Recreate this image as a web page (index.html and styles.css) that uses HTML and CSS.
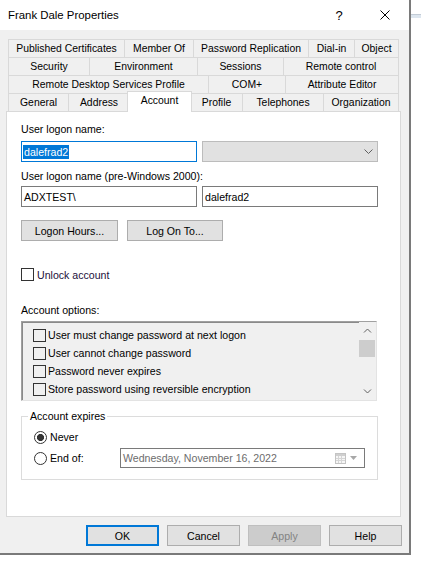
FILE: index.html
```html
<!DOCTYPE html>
<html>
<head>
<meta charset="utf-8">
<title>Frank Dale Properties</title>
<link rel="stylesheet" href="styles.css">
</head>
<body>
<div class="screen">
  <div class="window">
    <div class="titlebar">
      <span class="title">Frank Dale Properties</span>
      <span class="cap-btn cap-help">?</span>
      <span class="cap-btn cap-close">
        <svg width="10" height="10" viewBox="0 0 10 10"><path d="M0.5 0.5 L9.5 9.5 M9.5 0.5 L0.5 9.5" stroke="#000" stroke-width="1" fill="none"/></svg>
      </span>
    </div>
    <div class="body">
      <div class="tabs">
        <div class="tabrow">
          <div class="tab w116">Published Certificates</div>
          <div class="tab w69">Member Of</div>
          <div class="tab w115">Password Replication</div>
          <div class="tab w46">Dial-in</div>
          <div class="tab w45 last">Object</div>
        </div>
        <div class="tabrow">
          <div class="tab w81">Security</div>
          <div class="tab w108">Environment</div>
          <div class="tab w86">Sessions</div>
          <div class="tab w116 last">Remote control</div>
        </div>
        <div class="tabrow">
          <div class="tab w200">Remote Desktop Services Profile</div>
          <div class="tab w77">COM+</div>
          <div class="tab w114 last">Attribute Editor</div>
        </div>
        <div class="tabrow">
          <div class="tab w60">General</div>
          <div class="tab w61">Address</div>
          <div class="tab sel">Account</div>
          <div class="tab w52">Profile</div>
          <div class="tab w81">Telephones</div>
          <div class="tab w76 last">Organization</div>
        </div>
      </div>
      <div class="panel">
        <div class="lbl">User logon name:</div>
        <div class="row r1">
          <div class="field focus"><span class="selected">dalefrad2</span></div>
          <div class="combo">
            <svg class="chev" width="9" height="5" viewBox="0 0 9 5"><path d="M0.5 0.5 L4.5 4.5 L8.5 0.5" stroke="#606060" stroke-width="1" fill="none"/></svg>
          </div>
        </div>
        <div class="lbl l2">User logon name (pre-Windows 2000):</div>
        <div class="row r2">
          <div class="field">ADXTEST\</div>
          <div class="field">dalefrad2</div>
        </div>
        <div class="row r3">
          <div class="btn w97">Logon Hours...</div>
          <div class="btn w96">Log On To...</div>
        </div>
        <div class="check-row unlock"><span class="cb"></span><span class="unlock-text">Unlock account</span></div>
        <div class="lbl l3">Account options:</div>
        <div class="listbox">
          <div class="items">
            <div class="item"><span class="cb"></span>User must change password at next logon</div>
            <div class="item"><span class="cb"></span>User cannot change password</div>
            <div class="item"><span class="cb"></span>Password never expires</div>
            <div class="item"><span class="cb"></span>Store password using reversible encryption</div>
          </div>
          <div class="vscroll">
            <div class="sb-btn">
              <svg width="9" height="5" viewBox="0 0 9 5"><path d="M1 4.5 L4.5 1 L8 4.5" stroke="#606060" stroke-width="1" fill="none"/></svg>
            </div>
            <div class="sb-thumb"></div>
            <div class="sb-track"></div>
            <div class="sb-btn">
              <svg width="9" height="5" viewBox="0 0 9 5"><path d="M1 0.5 L4.5 4 L8 0.5" stroke="#606060" stroke-width="1" fill="none"/></svg>
            </div>
          </div>
        </div>
        <fieldset class="group">
          <legend>Account expires</legend>
          <div class="group-body">
            <div class="radio-row"><span class="radio on"></span><span>Never</span></div>
            <div class="radio-row">
              <div class="radio-item"><span class="radio"></span><span>End of:</span></div>
              <div class="date">
                <span class="date-text">Wednesday, November 16, 2022</span>
                <svg class="cal" width="11" height="11" viewBox="0 0 11 11">
                  <rect x="0.5" y="0.5" width="10" height="10" fill="#f6f6f6" stroke="#c4c4c4"/>
                  <rect x="1" y="1" width="9" height="2" fill="#cfcfcf"/>
                  <path d="M3.5 3 V10 M6.5 3 V10 M1 5.5 H10 M1 7.5 H10" stroke="#d6d6d6" stroke-width="1"/>
                </svg>
                <svg class="tri" width="7" height="4" viewBox="0 0 7 4"><path d="M0 0 H7 L3.5 4 Z" fill="#a8a8a8"/></svg>
              </div>
            </div>
          </div>
        </fieldset>
      </div>
      <div class="footer">
        <div class="btn fbtn default">OK</div>
        <div class="btn fbtn">Cancel</div>
        <div class="btn fbtn disabled">Apply</div>
        <div class="btn fbtn">Help</div>
      </div>
    </div>
  </div>
  <div class="side"><div class="side-band"></div></div>
</div>
</body>
</html>
```
FILE: styles.css
```css
* { box-sizing: border-box; }
html, body { margin: 0; padding: 0; background: #fff; }
body {
  font-family: "Liberation Sans", Arial, sans-serif;
  font-size: 10.6px;
  color: #000;
}
.screen { display: flex; align-items: flex-start; width: 421px; height: 562px; }
.window {
  flex: none;
  width: 411px;
  height: 555px;
  background: #f0f0f0;
  border-right: 2px solid #7a7a7a;
  border-bottom: 2px solid #7a7a7a;
  display: flex;
  flex-direction: column;
}
.titlebar {
  flex: none;
  height: 30px;
  background: #fff;
  display: flex;
  align-items: center;
  padding-left: 8px;
  padding-right: 1px;
}
.title { font-size: 11.4px; }
.cap-btn {
  width: 46px;
  height: 30px;
  display: flex;
  align-items: center;
  justify-content: center;
}
.cap-help { margin-left: auto; font-size: 13px; }
.body { flex: 1; padding: 9px 7px 0 6px; }

/* tabs */
.tabs { margin-left: 2px; width: 391px; }
.tabrow { display: flex; height: 18px; align-items: flex-start; }
.tab {
  flex: none;
  height: 18px;
  background: #f0f0f0;
  border-top: 1px solid #d9d9d9;
  border-left: 1px solid #d9d9d9;
  text-align: center;
  line-height: 17px;
  white-space: nowrap;
  font-size: 10.4px;
}
.tab.last { border-right: 1px solid #d9d9d9; }
.tab.sel {
  width: 65px;
  height: 21px;
  margin: -2px -2px 0 -2px;
  background: #fff;
  border-right: 1px solid #d9d9d9;
  line-height: 18px;
  position: relative;
  z-index: 1;
}
.w45 { width: 45px; } .w46 { width: 46px; } .w52 { width: 52px; }
.w60 { width: 60px; } .w61 { width: 61px; } .w69 { width: 69px; }
.w76 { width: 76px; } .w77 { width: 77px; } .w81 { width: 81px; }
.w86 { width: 86px; } .w108 { width: 108px; } .w114 { width: 114px; }
.w115 { width: 115px; } .w116 { width: 116px; } .w200 { width: 200px; }

/* panel */
.panel {
  width: 395px;
  height: 406px;
  background: #fff;
  border: 1px solid #d9d9d9;
  padding: 11px 0 0 14px;
}
.lbl { height: 13px; line-height: 13px; white-space: nowrap; }
.l2 { margin-top: 8px; }
.l3 { margin-top: 23px; }
.row { display: flex; }
.r1 { margin-top: 5px; gap: 5px; }
.r2 { margin-top: 3px; gap: 5px; }
.r3 { margin-top: 13px; gap: 9px; }
.field {
  width: 176px;
  height: 21px;
  background: #fff;
  border: 1px solid #7a7a7a;
  display: flex;
  align-items: center;
  padding-left: 2px;
  white-space: nowrap;
}
.field.focus { border-color: #0078d7; padding-left: 1px; }
.selected {
  background: #0078d7;
  color: #fff;
  height: 14px;
  line-height: 14px;
  padding: 0 1px;
}
.combo {
  width: 176px;
  height: 21px;
  background: #e1e1e1;
  border: 1px solid #bcbcbc;
  display: flex;
  align-items: center;
  justify-content: flex-end;
  padding-right: 4px;
}
.btn {
  height: 21px;
  background: #e1e1e1;
  border: 1px solid #adadad;
  display: flex;
  align-items: center;
  justify-content: center;
  white-space: nowrap;
}
.w97 { width: 97px; }
.w96 { width: 96px; }

.check-row { display: flex; align-items: center; height: 13px; }
.unlock { margin-top: 27px; gap: 3px; }
.unlock-text { color: #22103a; }
.cb {
  flex: none;
  width: 13px;
  height: 13px;
  border: 1px solid #333;
  background: transparent;
}

.listbox {
  margin-top: 4px;
  width: 356px;
  height: 80px;
  background: #f0f0f0;
  border-top: 1px solid #a0a0a0;
  border-left: 1px solid #a0a0a0;
  border-right: 1px solid #e3e3e3;
  border-bottom: 1px solid #e3e3e3;
  box-shadow: inset 1px 1px 0 #8a8a8a;
  display: flex;
  overflow: hidden;
}
.items { flex: 1; padding: 4px 0 0 11px; }
.item {
  height: 18px;
  display: flex;
  align-items: center;
  gap: 2px;
  white-space: nowrap;
}
.vscroll {
  flex: none;
  width: 17px;
  display: flex;
  flex-direction: column;
  background: #f0f0f0;
}
.sb-btn {
  height: 17px;
  display: flex;
  align-items: center;
  justify-content: center;
}
.sb-thumb { height: 17px; margin: 1px 1px 0 0; background: #cdcdcd; }
.sb-track { flex: 1; }

.group {
  margin: 9px 0 0 0;
  padding: 0;
  width: 357px;
  border: 1px solid #dcdcdc;
  min-width: 0;
}
.group legend {
  margin-left: 6px;
  padding: 0 2px;
  height: 13px;
  line-height: 13px;
}
.group-body { padding: 4px 0 11px 12px; display: flex; flex-direction: column; gap: 1px; }
.radio-row { height: 20px; display: flex; align-items: center; gap: 3px; }
.radio-item { width: 86px; display: flex; align-items: center; gap: 3px; }
.radio {
  flex: none;
  width: 13px;
  height: 13px;
  border: 1px solid #333;
  border-radius: 50%;
  background: #fff;
}
.radio.on { background: radial-gradient(circle, #333 0 3.3px, #fff 3.8px); }
.date {
  width: 245px;
  height: 20px;
  border: 1px solid #7a7a7a;
  background: #fff;
  display: flex;
  align-items: center;
  padding: 0 7px 0 2px;
  margin-left: -3px;
}
.date-text { color: #6d6d6d; flex: 1; white-space: nowrap; }
.cal { margin-right: 4px; }

.footer {
  margin-top: 8px;
  display: flex;
  justify-content: flex-end;
  gap: 8px;
}
.fbtn { width: 73px; }
.btn.default { border: 2px solid #0078d7; }
.btn.disabled { background: #cccccc; border-color: #bfbfbf; color: #838383; }

.side { flex: none; width: 10px; padding-top: 14px; }
.side-band { height: 4px; background: #dde6ef; border-top: 1px solid #c3ccd6; }
```
